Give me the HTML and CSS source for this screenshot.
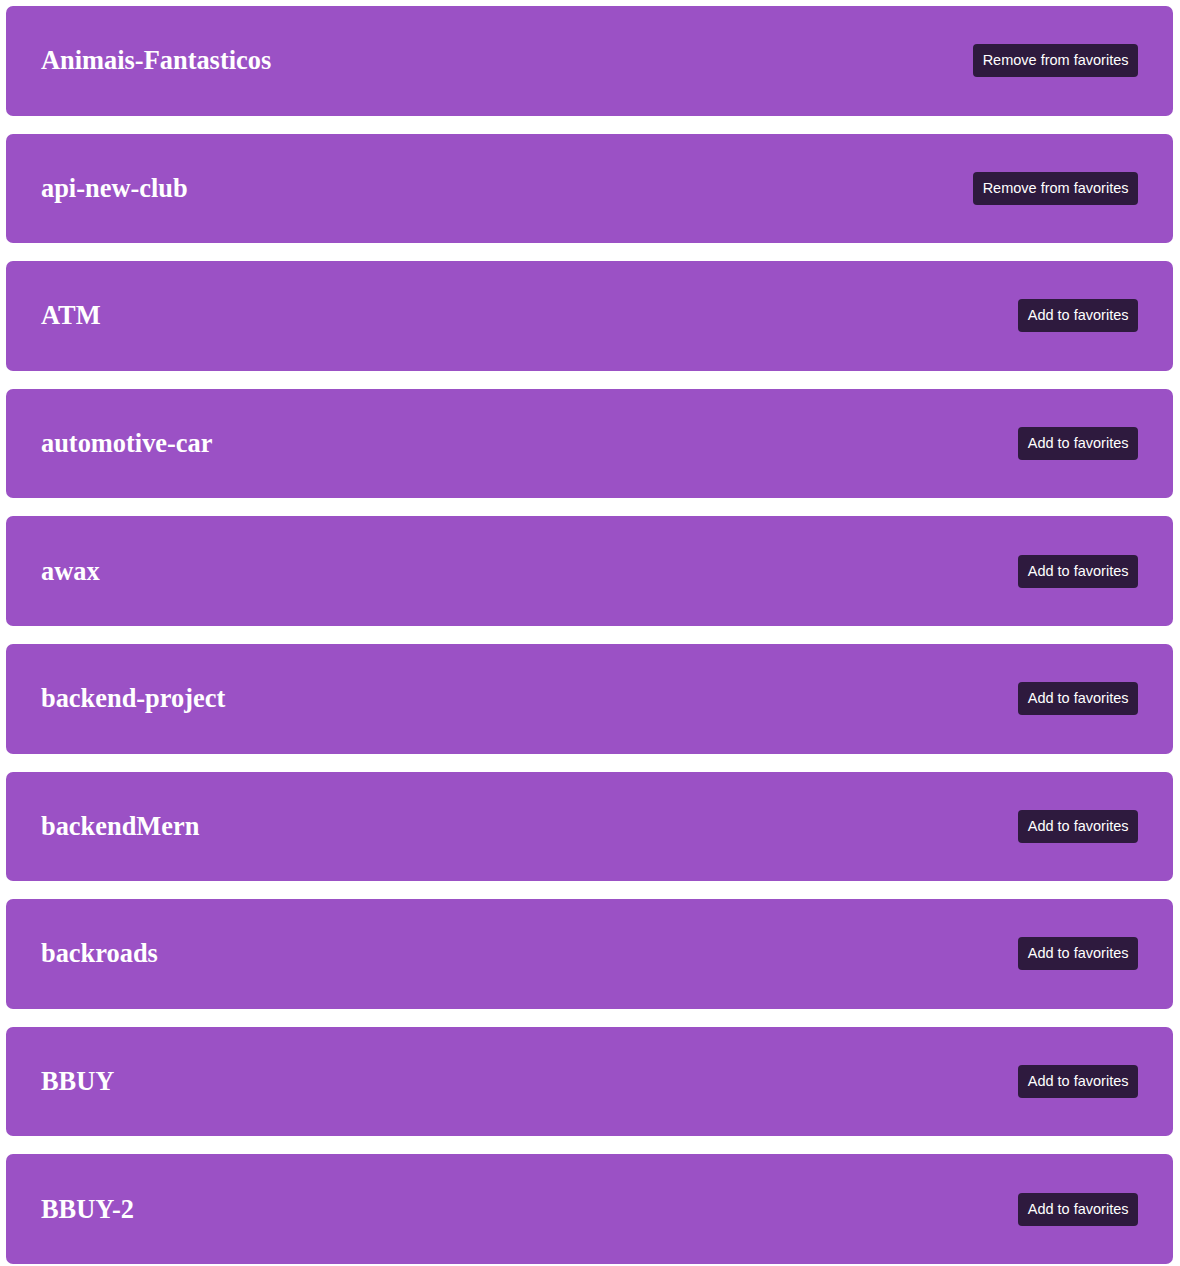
FILE: index.html
```html
<!DOCTYPE html>
<html>
<head>
<meta charset="utf-8">
<link rel="stylesheet" href="styles.css">
</head>
<body>
<div class="list">
  <div class="card"><h2 class="title">Animais-Fantasticos</h2><button class="btn">Remove from favorites</button></div>
  <div class="card"><h2 class="title">api-new-club</h2><button class="btn">Remove from favorites</button></div>
  <div class="card"><h2 class="title">ATM</h2><button class="btn">Add to favorites</button></div>
  <div class="card"><h2 class="title">automotive-car</h2><button class="btn">Add to favorites</button></div>
  <div class="card"><h2 class="title">awax</h2><button class="btn">Add to favorites</button></div>
  <div class="card"><h2 class="title">backend-project</h2><button class="btn">Add to favorites</button></div>
  <div class="card"><h2 class="title">backendMern</h2><button class="btn">Add to favorites</button></div>
  <div class="card"><h2 class="title">backroads</h2><button class="btn">Add to favorites</button></div>
  <div class="card"><h2 class="title">BBUY</h2><button class="btn">Add to favorites</button></div>
  <div class="card"><h2 class="title">BBUY-2</h2><button class="btn">Add to favorites</button></div>
</div>
</body>
</html>
```
FILE: styles.css
```css
html, body {
  margin: 0;
  padding: 0;
  background: #ffffff;
}
.list {
  display: flex;
  flex-direction: column;
  gap: 18px;
  padding: 6px 7px 6px 6px;
}
.card {
  background: #9b51c5;
  border-radius: 7px;
  display: flex;
  align-items: center;
  justify-content: space-between;
  padding: 0 35px;
  height: 109.6px;
  box-sizing: border-box;
}
.title {
  margin: 0;
  font-family: "Liberation Serif", "Times New Roman", serif;
  font-weight: bold;
  font-size: 26.4px;
  color: #ffffff;
}
.btn {
  background: #2e1a3e;
  color: #ffffff;
  border: none;
  border-radius: 4px;
  font-family: "Liberation Sans", Arial, sans-serif;
  font-size: 14.5px;
  line-height: 17px;
  padding: 8px 9.5px;
  cursor: pointer;
}
```
